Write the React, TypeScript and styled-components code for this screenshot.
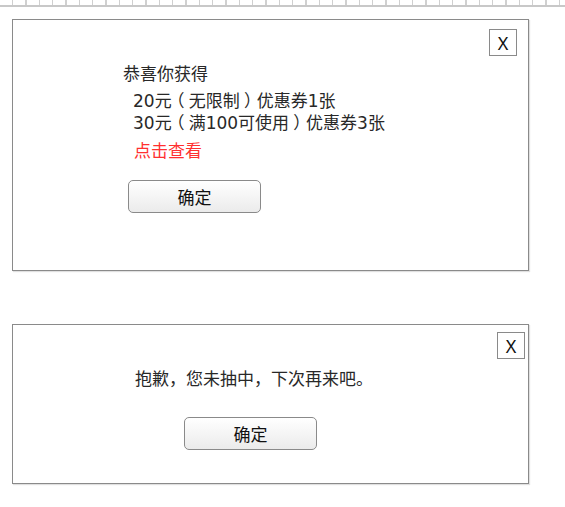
import React from 'react'
import styled, { createGlobalStyle } from 'styled-components'

const GlobalStyle = createGlobalStyle`
  html, body {
    margin: 0;
    padding: 0;
    background: #ffffff;
  }
  body {
    font-family: 'DejaVu Sans', 'Noto Sans CJK SC', sans-serif;
    color: #282828;
  }
`

const Page = styled.div`
  width: 565px;
  height: 507px;
  overflow: hidden;
`

const Ruler = styled.div`
  height: 7px;
  background:
    linear-gradient(#c8c8c8, #c8c8c8) 0 5px / 100% 2px no-repeat,
    repeating-linear-gradient(
      to right,
      transparent 0,
      transparent 12px,
      #d0d0d0 12px,
      #d0d0d0 13.33px
    ) 0 0 / 100% 5px no-repeat;
`

const Dialog = styled.div<{ $top: number; $height: number }>`
  box-sizing: border-box;
  margin: ${({ $top }) => $top}px 0 0 12px;
  width: 517px;
  height: ${({ $height }) => $height}px;
  border: 1px solid #8a8a8a;
  box-shadow: 1px 1px 1px rgba(0, 0, 0, 0.12);
  background: #fff;
  display: flex;
  flex-direction: column;
`

const CloseRow = styled.div<{ $top: number; $right: number }>`
  display: flex;
  justify-content: flex-end;
  padding: ${({ $top, $right }) => `${$top}px ${$right}px 0 0`};
`

const CloseButton = styled.div`
  box-sizing: border-box;
  width: 28px;
  height: 27px;
  border: 1px solid #8a8a8a;
  display: flex;
  align-items: center;
  justify-content: center;
  font-family: 'Noto Sans', sans-serif;
  font-size: 18px;
  color: #111;
`

const Body = styled.div<{ $left: number; $top: number }>`
  display: flex;
  flex-direction: column;
  align-items: flex-start;
  padding: ${({ $top, $left }) => `${$top}px 0 0 ${$left}px`};
`

const Title = styled.div`
  font-size: 17px;
  line-height: 22px;
`

const Lines = styled.div`
  margin-top: 5px;
  padding-left: 10px;
  font-size: 17px;
  line-height: 22px;
`

const Line = styled.div`
  height: 22px;
`

const Paren = styled.span`
  font-family: 'Noto Sans CJK SC', sans-serif;
  font-feature-settings: 'halt';
  padding: 0 0.25em;
  line-height: 0;
`

const Link = styled.div`
  margin: 6px 0 0 11px;
  font-size: 17px;
  line-height: 22px;
  color: #ff3030;
`

const OkButton = styled.div<{ $top: number; $indent: number }>`
  box-sizing: border-box;
  margin: ${({ $top, $indent }) => `${$top}px 0 0 ${$indent}px`};
  width: 133px;
  height: 33px;
  border: 1px solid #8a8a8a;
  border-radius: 5px;
  background: linear-gradient(#ffffff, #ebebeb);
  display: flex;
  align-items: center;
  justify-content: center;
  font-size: 17px;
  color: #111;
`

const Message = styled.div`
  font-size: 17px;
  line-height: 22px;
`

export default function App() {
  return (
    <Page>
      <GlobalStyle />
      <Ruler />

      <Dialog $top={12} $height={252}>
        <CloseRow $top={9} $right={11}>
          <CloseButton>X</CloseButton>
        </CloseRow>
        <Body $left={110} $top={7}>
          <Title>恭喜你获得</Title>
          <Lines>
            <Line>
              20元<Paren>（</Paren>无限制<Paren>）</Paren>优惠券1张
            </Line>
            <Line>
              30元<Paren>（</Paren>满100可使用<Paren>）</Paren>优惠券3张
            </Line>
          </Lines>
          <Link>点击查看</Link>
          <OkButton $top={18} $indent={5}>确定</OkButton>
        </Body>
      </Dialog>

      <Dialog $top={53} $height={160}>
        <CloseRow $top={7} $right={3}>
          <CloseButton>X</CloseButton>
        </CloseRow>
        <Body $left={122} $top={9}>
          <Message>抱歉，您未抽中，下次再来吧。</Message>
          <OkButton $top={27} $indent={49}>确定</OkButton>
        </Body>
      </Dialog>
    </Page>
  )
}
